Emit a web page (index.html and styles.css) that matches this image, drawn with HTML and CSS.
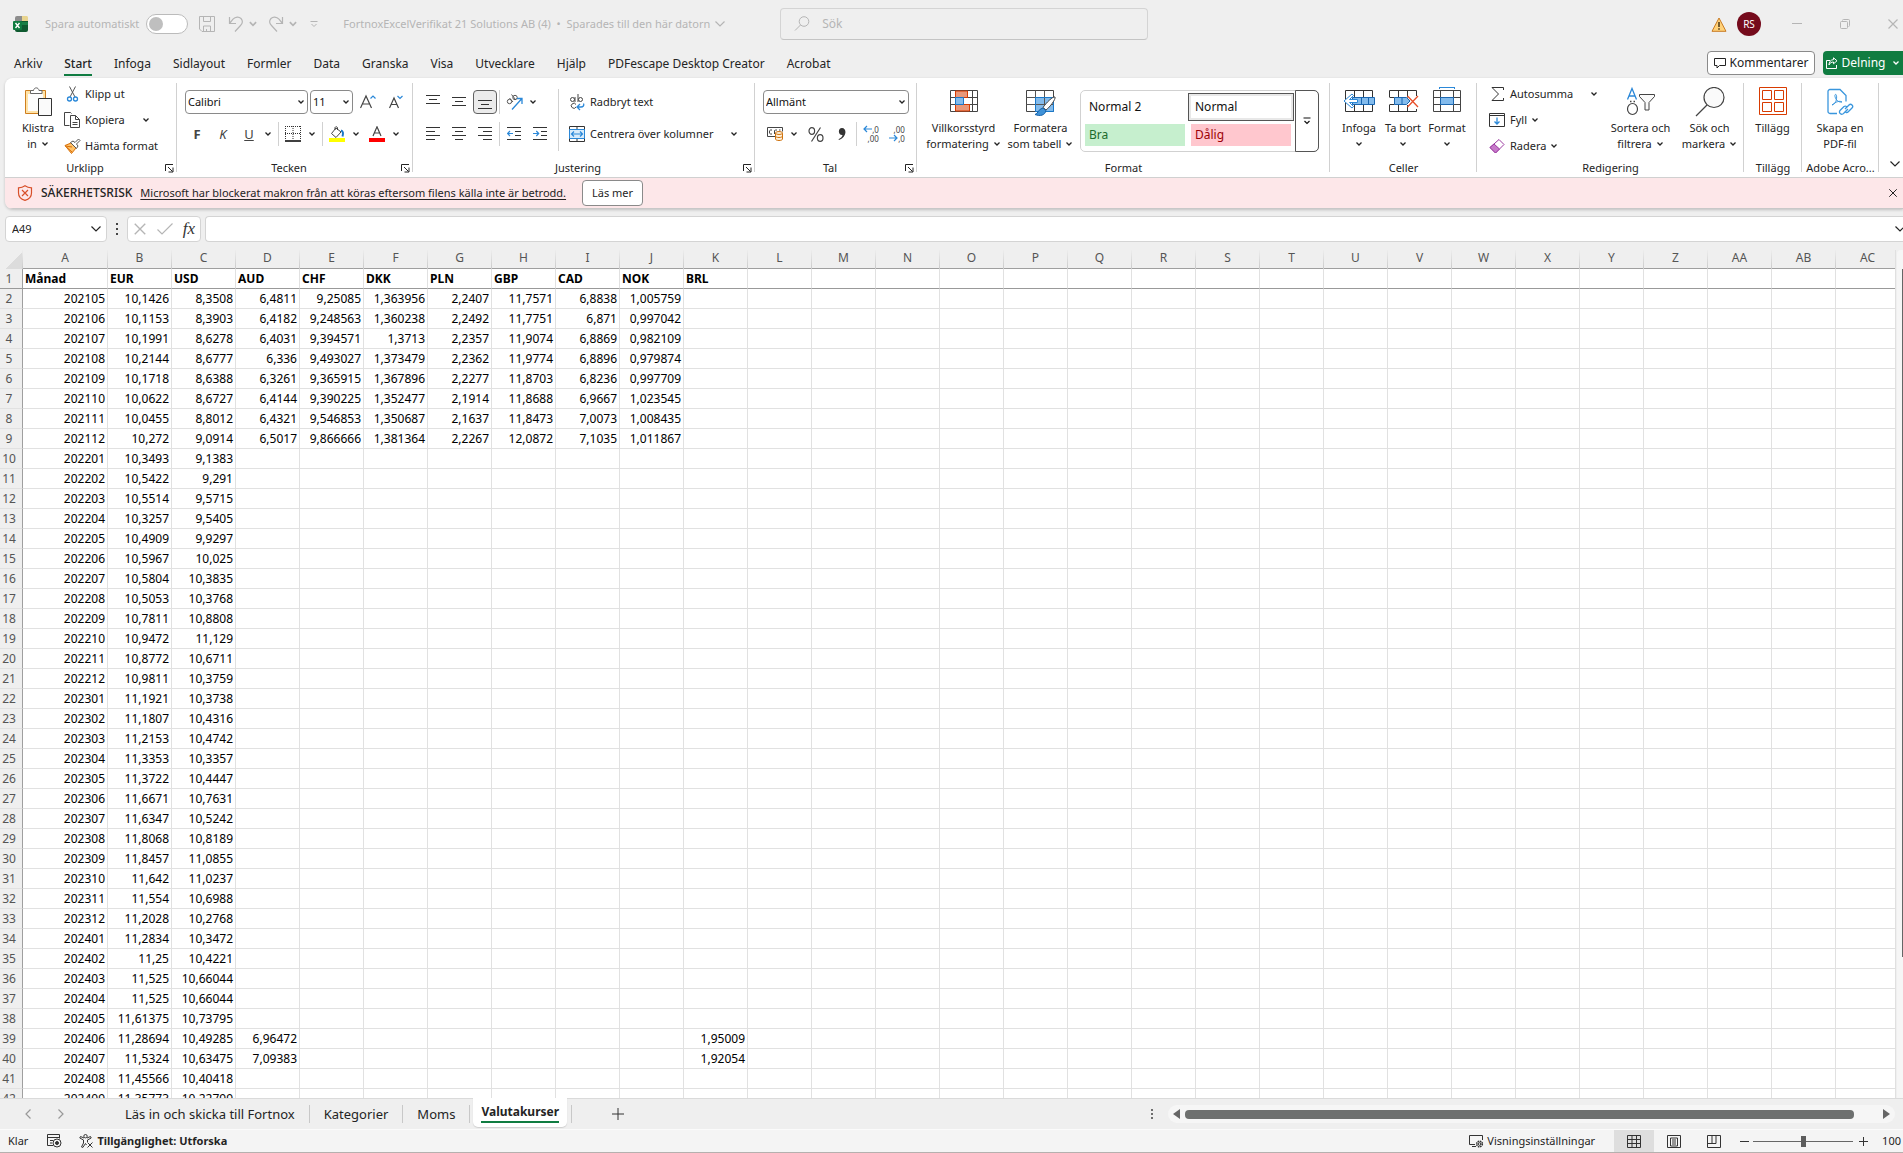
FILE: index.html
```html
<!DOCTYPE html>
<html lang="sv">
<head>
<meta charset="utf-8">
<title>FortnoxExcelVerifikat 21 Solutions AB (4)</title>
<link rel="stylesheet" href="styles.css">
</head>
<body>
<svg class="defs" aria-hidden="true">
  <symbol id="chev" viewBox="0 0 8 8"><path d="M1.5 2.5 4 5 6.5 2.5" fill="none" stroke="currentColor" stroke-width="1.3"/></symbol>
  <symbol id="chev-lg" viewBox="0 0 12 8"><path d="M1.5 1.5 6 6 10.5 1.5" fill="none" stroke="currentColor" stroke-width="1.2"/></symbol>
  <symbol id="close" viewBox="0 0 12 12"><path d="M1.5 1.5 10.500 10.500M10.500 1.500 1.500 10.500" fill="none" stroke="currentColor" stroke-width="1.2"/></symbol>
  <symbol id="launch" viewBox="0 0 9 9"><path d="M.5 7V.5H8M3 3l4.500 4.500M8 3.500V8H3.500" fill="none" stroke="currentColor"/></symbol>
</svg>

<header class="titlebar">
  <div class="title-left">
    <svg class="logo" width="16" height="16" viewBox="0 0 16 16"><path d="M4 0h5v6H2V2a2 2 0 0 1 2-2z" fill="#8d8d8d"/><path d="M9 0h5a2 2 0 0 1 1 2v4H9z" fill="#e8d48f"/><path d="M2 5h13v9a2 2 0 0 1-2 2H4a2 2 0 0 1-2-2z" fill="#0f5a30"/><path d="M9 6h6v3H9z" fill="#1a7f45"/><rect y="5" width="9" height="9" rx="1" fill="#107c41"/><path d="M2.500 7l4 5M6.500 7l-4 5" stroke="#fff" stroke-width="1.400"/></svg>
    <label class="autosave"><span>Spara automatiskt</span><input type="checkbox" class="toggle"></label>
    <button class="qa save" aria-label="Spara"><svg width="16" height="16" viewBox="0 0 16 16" fill="none" stroke="currentColor"><path d="M.5.5h15v15H3L.5 13zM4.500.5v5h7v-5M4.500 15.500V10h7v5.500M7.500 13v2"/></svg></button>
    <button class="qa undo" aria-label="Ångra"><svg width="16" height="16" viewBox="0 0 16 16" fill="none" stroke="currentColor" stroke-width="1.200"><path d="M1.500 1v6.500H8M1.500 7.500 5 3.200C7.500.500 11 .500 13 2.500c2 2.200 1.800 5-.500 7L7 15.500"/></svg><svg width="10" height="10"><use href="#chev"/></svg></button>
    <button class="qa redo" aria-label="Gör om"><svg width="16" height="16" viewBox="0 0 16 16" fill="none" stroke="currentColor" stroke-width="1.200"><path d="M14.500 1v6.500H8M14.500 7.500 11 3.200C8.500.500 5 .500 3 2.500c-2 2.200-1.800 5 .500 7L9 15.500"/></svg><svg width="10" height="10"><use href="#chev"/></svg></button>
    <button class="qa more" aria-label="Anpassa"><svg width="8" height="8" viewBox="0 0 8 8" fill="none" stroke="currentColor"><path d="M.5 1.500h7M1.500 4 4 6.500 6.500 4"/></svg></button>
    <button class="doc">FortnoxExcelVerifikat 21 Solutions AB (4) &nbsp;•&nbsp; Sparades till den här datorn <svg width="12" height="8"><use href="#chev-lg"/></svg></button>
  </div>
  <label class="search"><svg width="16" height="16" viewBox="0 0 16 16" fill="none" stroke="currentColor"><circle cx="10" cy="5.500" r="4.800"/><path d="M6.500 9 1 14.500"/></svg><input type="text" placeholder="Sök" aria-label="Sök"></label>
  <div class="title-right">
    <svg width="16" height="15" viewBox="0 0 16 15"><path d="M8 1 15 14.300H1z" fill="#ffd27a" stroke="#c87a22"/><path d="M8 5v5M8 11.300v1.500" stroke="#3a2a10" stroke-width="1.400"/></svg>
    <span class="avatar">RS</span>
    <button class="win" aria-label="Minimera"><svg width="10" height="10"><path d="M0 4.500h10" stroke="currentColor"/></svg></button>
    <button class="win" aria-label="Återställ"><svg width="10" height="10" fill="none" stroke="currentColor"><rect x=".5" y="2.500" width="7" height="7" rx="1"/><path d="M2.500 1.500a1 1 0 0 1 1-1h5a1 1 0 0 1 1 1v5a1 1 0 0 1-1 1"/></svg></button>
    <button class="win" aria-label="Stäng"><svg width="12" height="12"><use href="#close"/></svg></button>
  </div>
</header>

<nav class="tabs">
  <a href="#">Arkiv</a><a href="#" class="on">Start</a><a href="#">Infoga</a><a href="#">Sidlayout</a><a href="#">Formler</a><a href="#">Data</a><a href="#">Granska</a><a href="#">Visa</a><a href="#">Utvecklare</a><a href="#">Hjälp</a><a href="#">PDFescape Desktop Creator</a><a href="#">Acrobat</a>
  <button class="comments"><svg width="12" height="11" viewBox="0 0 12 11" fill="none" stroke="currentColor"><path d="M.5.5h11v7H5.500l-2.500 2.500V7.500H.5z"/></svg>Kommentarer</button>
  <button class="share"><svg width="12" height="12" viewBox="0 0 12 12" fill="none" stroke="currentColor"><path d="M4 3.500H.5v8h10V8M7.500.8l3.500 3-3.500 3V5C5.500 5 4 5.800 3 8c0-3 1.500-5.200 4.500-5.400z"/></svg>Delning<svg class="chev" width="8" height="8"><use href="#chev"/></svg></button>
</nav>

<main class="ribbon-wrap">
<div class="ribbon">
  <section class="group g-clip">
    <div class="body">
      <button class="big w52"><svg width="32" height="30" viewBox="0 0 32 30" fill="none"><path d="M3.500 3.500h20v23h-20z" fill="#ffe3a8" stroke="#cf7f1e"/><path d="M6 7h15v17H6z" fill="#fdfdfd"/><path d="M8.500 6.500v-3h3c.500-3.500 5-3.500 5.500 0h3v3z" fill="#fff" stroke="#666"/><path d="M16.500 11.500h13v17h-13z" fill="#fafafa" stroke="#333"/></svg><span>Klistra</span><span>in <svg width="8" height="8"><use href="#chev"/></svg></span></button>
      <div class="stack">
        <button class="small"><svg width="17" height="16" viewBox="0 0 17 16" fill="none"><path d="M5.500.5 11 11M11.500.5 6 11" stroke="#555"/><circle cx="5.500" cy="13" r="2" stroke="#2b88d8" stroke-width="1.300"/><circle cx="11.500" cy="13" r="2" stroke="#2b88d8" stroke-width="1.300"/></svg>Klipp ut</button>
        <button class="small"><svg width="17" height="16" viewBox="0 0 17 16" fill="none" stroke="#444"><path d="M5.500 13.500h-5V.5h6l1 1M6.500 3.500h5l4 4v8h-9zM11.500 3.500v4h4M8.500 10.500h5M8.500 12.500h5"/></svg>Kopiera<svg class="far" width="8" height="8"><use href="#chev"/></svg></button>
        <button class="small"><svg width="17" height="16" viewBox="0 0 17 16" fill="none"><path d="M1 7.500l6-2.500 5 5-4.500 5.500z" fill="#ffc269" stroke="#d8700a"/><path d="M3 9.500l5 4.500M1 8l7 1" stroke="#d8700a"/><path d="M6.500 4.500 9 3l2 1.500L14.500 1 16 2.500 12.500 6 14 8l-1.500 2.500z" fill="#fff" stroke="#555"/></svg>Hämta format</button>
      </div>
    </div>
    <footer><span>Urklipp</span><button class="launch" aria-label="Urklipp"><svg width="9" height="9"><use href="#launch"/></svg></button></footer>
  </section>

  <section class="group g-font">
    <div class="body rows">
      <div class="row">
        <span class="combo w122"><select aria-label="Teckensnitt"><option>Calibri</option></select><svg width="8" height="8"><use href="#chev"/></svg></span>
        <span class="combo w43"><select aria-label="Storlek"><option>11</option></select><svg width="8" height="8"><use href="#chev"/></svg></span>
        <button class="tb" aria-label="Öka"><svg width="16" height="16" viewBox="0 0 16 16" fill="none" stroke="#444" stroke-width="1.200"><path d="M.5 14 6 2l5.500 12M2.500 10h7"/><path d="M10.500 4.500 13 2l2.500 2.500" stroke="#2b88d8"/></svg></button>
        <button class="tb" aria-label="Minska"><svg width="14" height="16" viewBox="0 0 14 16" fill="none" stroke="#444" stroke-width="1.200"><path d="M.5 14 5 4l4.500 10M2 10.500h6"/><path d="M8.500 2 11 4.500 13.500 2" stroke="#2b88d8"/></svg></button>
      </div>
      <div class="row low">
        <button class="tb"><b>F</b></button><button class="tb"><i>K</i></button><button class="tb"><u>U</u></button><button class="cv"><svg width="8" height="8"><use href="#chev"/></svg></button>
        <span class="sep"></span>
        <button class="tb" aria-label="Kantlinjer"><svg width="16" height="16" viewBox="0 0 16 16" fill="none" stroke="#333"><path d="M.5 0v14M15.500 0v14M0 .5h16M8 0v14M0 7.500h16" stroke-dasharray="1 1"/><path d="M0 15h16" stroke="#000" stroke-width="1.500"/></svg></button><button class="cv"><svg width="8" height="8"><use href="#chev"/></svg></button>
        <span class="sep"></span>
        <button class="tb" aria-label="Fyllning"><svg width="16" height="16" viewBox="0 0 16 16" fill="none"><path d="M7 2 2.500 7.500l4.500 4 5-5.500zM6 4V1.500C6.500.500 8 .500 8.500 1.500V4" stroke="#444"/><path d="M12 4.500c2 .500 2.500 2.500 1.500 6" stroke="#1a78c8" stroke-width="2"/><path d="M0 12h16v4H0z" fill="#ff0"/></svg></button><button class="cv"><svg width="8" height="8"><use href="#chev"/></svg></button>
        <button class="tb fc" aria-label="Teckenfärg"><svg width="16" height="16" viewBox="0 0 16 16" fill="none"><path d="M4 10 8 .8 12 10M5.500 7h5" stroke="#444" stroke-width="1.200"/><path d="M0 12h16v4H0z" fill="red"/></svg></button><button class="cv"><svg width="8" height="8"><use href="#chev"/></svg></button>
      </div>
    </div>
    <footer><span>Tecken</span><button class="launch" aria-label="Tecken"><svg width="9" height="9"><use href="#launch"/></svg></button></footer>
  </section>

  <section class="group g-align">
    <div class="body">
      <div class="rows">
        <div class="row tight">
          <button class="tb" aria-label="Överst"><svg width="14" height="14"><path d="M0 .5h14M3 4.500h8M0 8.500h14" stroke="#333"/></svg></button>
          <button class="tb" aria-label="Mitten"><svg width="14" height="14"><path d="M0 2.500h14M3 6.500h8M0 10.500h14" stroke="#333"/></svg></button>
          <button class="tb sel" aria-label="Nederst"><svg width="14" height="14"><path d="M0 5.500h14M3 9.500h8M0 13.500h14" stroke="#333"/></svg></button>
          <span class="sep"></span>
          <button class="tb" aria-label="Orientering"><svg width="17" height="16" viewBox="0 0 17 16" fill="none" stroke="#555"><circle cx="3.500" cy="7.500" r="2.200"/><path d="M3.500 4l3.500 4M5.500.5l4 5"/><circle cx="9" cy="3.500" r="2.200"/><path d="M6 15.500 15.500 5M11 4.500h5V10" stroke="#2b88d8" stroke-width="1.300"/></svg></button><button class="cv"><svg width="8" height="8"><use href="#chev"/></svg></button>
        </div>
        <div class="row low tight">
          <button class="tb" aria-label="Vänster"><svg width="14" height="14"><path d="M0 .5h14M0 4.500h9M0 8.500h14M0 12.500h9" stroke="#333"/></svg></button>
          <button class="tb" aria-label="Centrera"><svg width="14" height="14"><path d="M0 .5h14M3 4.500h8M0 8.500h14M3 12.500h8" stroke="#333"/></svg></button>
          <button class="tb" aria-label="Höger"><svg width="14" height="14"><path d="M0 .5h14M5 4.500h9M0 8.500h14M5 12.500h9" stroke="#333"/></svg></button>
          <span class="sep"></span>
          <button class="tb" aria-label="Minska indrag"><svg width="14" height="14" fill="none"><path d="M0 .5h14M8 4.500h6M8 8.500h6M0 12.500h14" stroke="#333"/><path d="M6 6.500H.8M3 4 .6 6.500 3 9" stroke="#2b88d8" stroke-width="1.200"/></svg></button>
          <button class="tb" aria-label="Öka indrag"><svg width="14" height="14" fill="none"><path d="M0 .5h14M8 4.500h6M8 8.500h6M0 12.500h14" stroke="#333"/><path d="M0 6.500h5.500M3.300 4l2.400 2.500L3.300 9" stroke="#2b88d8" stroke-width="1.200"/></svg></button>
        </div>
      </div>
      <span class="tallsep"></span>
      <div class="rows wrapcol">
        <button class="small r24"><svg width="18" height="17" viewBox="0 0 18 17" fill="none" stroke="#444"><circle cx="4.500" cy="5.500" r="2"/><path d="M7 3v5M10 0v8M8 13a2.500 2.500 0 1 1 0-2.500"/><circle cx="12.500" cy="5.500" r="2"/><path d="M15.500 9.500c1 2-.500 3.500-2.500 3.500H9.500M12 10l-3 3 3 3" stroke="#2b88d8" stroke-width="1.300"/></svg>Radbryt text</button>
        <button class="small r32"><svg width="18" height="16" viewBox="0 0 18 16" fill="none" stroke="#333"><path d="M1.500.5h15v15h-15zM9 .5v3M9 12.500v3"/><path d="M1.500 3.500h15v9h-15z" fill="#d9ecfb" stroke="#2b88d8"/><path d="M4 8h10M6 5.500 3.500 8 6 10.500M12 5.500 14.500 8 12 10.500" stroke="#2b88d8" stroke-width="1.200"/></svg>Centrera över kolumner<svg class="far" width="8" height="8"><use href="#chev"/></svg></button>
      </div>
    </div>
    <footer><span>Justering</span><button class="launch" aria-label="Justering"><svg width="9" height="9"><use href="#launch"/></svg></button></footer>
  </section>

  <section class="group g-num">
    <div class="body rows">
      <div class="row">
        <span class="combo w146"><select aria-label="Talformat"><option>Allmänt</option></select><svg width="8" height="8"><use href="#chev"/></svg></span>
      </div>
      <div class="row low tight">
        <button class="tb" aria-label="Valuta"><svg width="17" height="14" viewBox="0 0 17 14" fill="none" stroke="#444"><path d="M8 9.500H.5v-9h15v4M5 3H3.500C2 3 2 7 3.500 7H5M7.500 7V3.500C8 3 9 3 10 3M12 3h1.500"/><path d="M8.500 6v6c0 2 7 2 7 0V6" fill="#fff0d8" stroke="#cf7310"/><ellipse cx="12" cy="6" rx="3.500" ry="1.500" fill="#fff0d8" stroke="#cf7310"/><path d="M8.500 9c0 2 7 2 7 0" stroke="#cf7310"/></svg></button><button class="cv"><svg width="8" height="8"><use href="#chev"/></svg></button>
        <button class="tb pct" aria-label="Procent"><svg width="16" height="15" viewBox="0 0 16 15" fill="none" stroke="#444" stroke-width="1.200"><ellipse cx="3.800" cy="4" rx="2.800" ry="3.300"/><ellipse cx="12.200" cy="11" rx="2.800" ry="3.300"/><path d="M12.500.5l-9 14"/></svg></button>
        <button class="tb" aria-label="Tusental"><svg width="8" height="12" viewBox="0 0 8 12"><path d="M4 0c5 0 5 9-3 12l-.500-.800C3 10 4.500 8.500 4.500 7 0 7.500-.500 0 4 0z" fill="#333"/></svg></button>
        <span class="sep"></span>
        <button class="tb" aria-label="Öka decimal"><span class="dec"><span><svg width="9" height="8" fill="none" stroke="#2b88d8" stroke-width="1.200"><path d="M9 4H1M4 1 1 4l3 3"/></svg>,0</span><span>,00</span></span></button>
        <button class="tb" aria-label="Minska decimal"><span class="dec"><span>,00</span><span><svg width="9" height="8" fill="none" stroke="#2b88d8" stroke-width="1.200"><path d="M0 4h8M5 1l3 3-3 3"/></svg>,0</span></span></button>
      </div>
    </div>
    <footer><span>Tal</span><button class="launch" aria-label="Tal"><svg width="9" height="9"><use href="#launch"/></svg></button></footer>
  </section>

  <section class="group g-style">
    <div class="body">
      <button class="big w77"><svg width="28" height="30" viewBox="0 0 28 30" fill="none"><path d="M.5 3.500h27v21H.5zM.5 10.500h27M.5 17.500h27M22.500 3.500v21" fill="#fff" stroke="#444"/><path d="M5.500 4h12v6.500h-12zM5.500 17.500h14v6.500h-14z" fill="#e8987a" stroke="#d83b01"/><path d="M5.500 10.500h8v7h-8z" fill="#83bbec" stroke="#1a78c8"/></svg><span>Villkorsstyrd</span><span>formatering <svg width="8" height="8"><use href="#chev"/></svg></span></button>
      <button class="big w77"><svg width="30" height="30" viewBox="0 0 30 30" fill="none"><path d="M.5 3.500h27v21H.5z" fill="#fff" stroke="#444"/><path d="M9.500 10.500h18v14h-18z" fill="#83bbec"/><path d="M.5 10.500h27M.5 17.500h27M9.500 3.500v21M18.500 3.500v21" stroke="#555"/><path d="M9.500 10.500h18v14h-18z" stroke="#1a78c8"/><path d="M29 10c1 2-5 10-9 13l-3-2.500C20 16 27 9 29 10z" fill="#fff" stroke="#444"/><path d="M17 21l3 2.500c-1 5-6 6-11 4 3-.500 3.500-6 8-6.500z" fill="#3f92d8" stroke="#1460a8"/></svg><span>Formatera</span><span>som tabell <svg width="8" height="8"><use href="#chev"/></svg></span></button>
      <div class="gallery">
        <div class="styles">
          <button class="st">Normal 2</button><button class="st current">Normal</button>
          <button class="st good">Bra</button><button class="st bad">Dålig</button>
        </div>
        <button class="gmore" aria-label="Fler format"><svg width="8" height="8" viewBox="0 0 8 8" fill="none" stroke="currentColor" stroke-width="1.200"><path d="M.5 1h7M1.500 4 4 6.500 6.500 4"/></svg></button>
      </div>
    </div>
    <footer><span>Format</span></footer>
  </section>

  <section class="group g-cells">
    <div class="body">
      <button class="big w44"><svg width="32" height="30" viewBox="0 0 32 30" fill="none"><path d="M2.500 3.500h27v21h-27zM11.500 3.500v21M20.500 3.500v21" fill="#fff" stroke="#333"/><path d="M9.500 10.500h22v7h-22z" fill="#83bbec" stroke="#1a66b0"/><path d="M18.500 10.500v7M25.500 10.500v7" stroke="#1a66b0"/><path d="M14.500 12.500H6.500l4-4-1.500-1.500L1 14l8 7 1.500-1.500-4-4h8z" fill="#fff" stroke="#2b88d8"/></svg><span>Infoga</span><span><svg width="8" height="8"><use href="#chev"/></svg></span></button>
      <button class="big w44"><svg width="32" height="30" viewBox="0 0 32 30" fill="none"><path d="M2.500 10V3.500h27V9M2.500 18v6.500h27V22M11.500 3.500v7M20.500 3.500v7M11.500 18v6.500M20.500 18v6.500M2.500 10.500h5M2.500 17.500h5" stroke="#333"/><path d="M7.500 10.500h12l3.500 3.500-3.500 3.500h-12z" fill="#83bbec" stroke="#1a66b0"/><path d="M15 10.500v7" stroke="#1a66b0"/><path d="M20.500 9 31 20M31 9 20.500 20" stroke="#e8502a" stroke-width="1.300"/></svg><span>Ta bort</span><span><svg width="8" height="8"><use href="#chev"/></svg></span></button>
      <button class="big w44"><svg width="30" height="30" viewBox="0 0 30 30" fill="none"><path d="M1.500 3.500h27v21h-27zM1.500 10.500h27M1.500 17.500h27M8.500 3.500v21M21.500 3.500v21" fill="#fff" stroke="#444"/><path d="M8.500 10.500h13v7h-13z" fill="#83bbec" stroke="#1a66b0"/><path d="M7.500.5h15M7.500 0v2M22.500 0v2" stroke="#2b88d8"/></svg><span>Format</span><span><svg width="8" height="8"><use href="#chev"/></svg></span></button>
    </div>
    <footer><span>Celler</span></footer>
  </section>

  <section class="group g-edit">
    <div class="body">
      <div class="stack">
        <button class="small"><svg width="17" height="16" viewBox="0 0 17 16" fill="none" stroke="#333"><path d="M14.500 4V1.500H3L9.500 8 3 14.500h11.500V12"/></svg>Autosumma<svg class="far" width="8" height="8"><use href="#chev"/></svg></button>
        <button class="small"><svg width="17" height="16" viewBox="0 0 17 16" fill="none" stroke="#333"><path d="M.5 1.500h15v13H.5zM.5 3.500h15"/><path d="M8 5.500v6.500M5.500 9.500 8 12l2.500-2.500" stroke="#2b88d8" stroke-width="1.300"/></svg>Fyll<svg width="8" height="8"><use href="#chev"/></svg></button>
        <button class="small"><svg width="17" height="16" viewBox="0 0 17 16" fill="none" stroke="#9b3aa0"><path d="M10 1.500 15 6.500 6.500 15 1 9.500z" fill="#fff"/><path d="M5 6 10.500 11 6.500 15 1 9.500z" fill="#c678c9"/></svg>Radera<svg width="8" height="8"><use href="#chev"/></svg></button>
      </div>
      <button class="big w70"><svg width="30" height="30" viewBox="0 0 30 30" fill="none"><path d="M1.500 12.500 6 1.500l4.500 11M3 9h6" stroke="#2b88d8" stroke-width="1.300"/><ellipse cx="6.500" cy="22" rx="5" ry="5.500" stroke="#444" stroke-width="1.200"/><path d="M4 14.500h1.500M7.500 14.500H9" stroke="#444" stroke-width="1.300"/><path d="M13.500 7.500h15v2l-5.500 6v7.500h-4v-7.500l-5.500-6z" fill="#fafafa" stroke="#444"/></svg><span>Sortera och</span><span>filtrera <svg width="8" height="8"><use href="#chev"/></svg></span></button>
      <button class="big w70"><svg width="30" height="30" viewBox="0 0 30 30" fill="none" stroke="#444" stroke-width="1.200"><circle cx="19" cy="10.500" r="10" fill="#fafafa"/><path d="M12 18 1 29"/></svg><span>Sök och</span><span>markera <svg width="8" height="8"><use href="#chev"/></svg></span></button>
    </div>
    <footer><span>Redigering</span></footer>
  </section>

  <section class="group g-add">
    <div class="body">
      <button class="big w57"><svg width="28" height="30" viewBox="0 0 28 30" fill="none" stroke="#d83b01"><path d="M.5.5h27v27H.5zM3.500 3.500h9v9h-9zM15.500 3.500h9v9h-9zM3.500 15.500h9v9h-9zM15.500 15.500h9v9h-9z"/></svg><span>Tillägg</span></button>
    </div>
    <footer><span>Tillägg</span></footer>
  </section>

  <section class="group g-adobe">
    <div class="body">
      <button class="big w76"><svg width="28" height="30" viewBox="0 0 28 30" fill="none" stroke="#3a96dd" stroke-width="1.300"><path d="M11 26.500H4a2 2 0 0 1-2-2v-20a2 2 0 0 1 2-2h10l6 6v6"/><path d="M6 18c4-1 5-6 4.500-9.500-.500-2-2-1-1.500 1 .800 3.500 3.500 6 7 5.500-2-1.500-6-.500-10 3z" stroke-width="1"/><path d="M19 22l4-4c2-2 5 1 3 3l-4 4c-1 1-2.500.500-3-.500M22 22l-4 4c-2 3-6 0-4-2.500l4-4c1.500-1 3 0 3 1"/></svg><span>Skapa en</span><span>PDF-fil</span></button>
    </div>
    <footer><span>Adobe Acro...</span></footer>
  </section>
  <button class="collapse" aria-label="Dölj menyfliksområdet"><svg width="12" height="8"><use href="#chev-lg"/></svg></button>
</div>

<div class="risk">
  <svg width="16" height="16" viewBox="0 0 16 16" fill="none" stroke="#d8502a" stroke-width="1.200"><path d="M8 .8c2 1.500 4 2 6.500 2V8c0 4-3 6.300-6.500 7.300C4.500 14.300 1.500 12 1.500 8V2.800c2.500 0 4.500-.500 6.500-2zM5 5l6 6M11 5l-6 6"/></svg>
  <span class="risk-h">SÄKERHETSRISK</span>
  <a href="#">Microsoft har blockerat makron från att köras eftersom filens källa inte är betrodd.</a>
  <button class="readmore">Läs mer</button>
  <button class="risk-x" aria-label="Stäng"><svg width="10" height="10" viewBox="0 0 12 12"><use href="#close"/></svg></button>
</div>
</main>

<div class="fbar">
  <div class="namebox"><input type="text" value="A49" aria-label="Namnruta"><svg width="12" height="8"><use href="#chev-lg"/></svg></div>
  <svg class="dots" width="2" height="12"><path d="M0 1h2M0 6h2M0 11h2" stroke="#444" stroke-width="2"/></svg>
  <div class="fbtns">
    <button aria-label="Avbryt"><svg width="14" height="14" viewBox="0 0 12 12"><use href="#close"/></svg></button>
    <button aria-label="Ange"><svg width="16" height="12" fill="none" stroke="currentColor" stroke-width="1.200"><path d="M.5 6.500 5 11 15.500.5"/></svg></button>
    <button class="fx">fx</button>
  </div>
  <div class="finput"><input type="text" aria-label="Formelfält"><svg width="12" height="8"><use href="#chev-lg"/></svg></div>
</div>

<div class="sheet">
  <div class="grid"><table id="grid"><thead></thead><tbody></tbody></table></div>
  <div class="vscroll"><span></span></div>
</div>

<div class="sheetbar">
  <button class="nav" aria-label="Föregående"><svg width="6" height="10" fill="none" stroke="currentColor" stroke-width="1.200"><path d="M5.500.5 1 5l4.500 4.500"/></svg></button>
  <button class="nav" aria-label="Nästa"><svg width="6" height="10" fill="none" stroke="currentColor" stroke-width="1.200"><path d="M.5.5 5 5 .5 9.500"/></svg></button>
  <div class="sheets">
    <button>Läs in och skicka till Fortnox</button><button>Kategorier</button><button>Moms</button><button class="active"><span>Valutakurser</span></button>
  </div>
  <button class="plus" aria-label="Nytt blad"><svg width="12" height="12"><path d="M6 0v12M0 6h12" stroke="#333"/></svg></button>
  <svg class="grip" width="2" height="10"><path d="M0 1h2M0 5h2M0 9h2" stroke="#444" stroke-width="1.500"/></svg>
  <div class="hscroll"><svg width="7" height="10"><path d="M7 0v10L0 5z" fill="#666"/></svg><span></span><svg width="7" height="10"><path d="M0 0v10L7 5z" fill="#666"/></svg></div>
</div>

<footer class="status">
  <span>Klar</span>
  <svg class="mac" width="15" height="14" viewBox="0 0 15 14" fill="none" stroke="#333"><path d="M6 11.500H.5V.5h12v4M.5 3.500h12M3 6.500h3M3 9h2"/><circle cx="10" cy="9" r="4"/><circle cx="10" cy="9" r="1.500" fill="#333"/></svg>
  <button class="acc"><svg width="15" height="14" viewBox="0 0 15 14" fill="none" stroke="#333"><circle cx="6.500" cy="2.200" r="1.700"/><path d="M5 4 1.500 2.500.800 4 4.500 6v3L2.500 13l1.300.5L6.500 9.500l1 1.500M8 4l3.500-1.500.7 1.500L8.500 6v2M8.500 8.500l5 5M13.500 8.500l-5 5"/></svg><b>Tillgänglighet: Utforska</b></button>
  <button class="disp"><svg width="15" height="13" viewBox="0 0 15 13" fill="none" stroke="#333"><path d="M6 9.500H.5v-9h13V5M3 11.500h4"/><circle cx="10.500" cy="9" r="2.800" stroke-width="1.600" stroke-dasharray="1.500 .7"/><circle cx="10.500" cy="9" r="1.300"/></svg>Visningsinställningar</button>
  <button class="view on" aria-label="Normal"><svg width="14" height="13" fill="none" stroke="#333"><path d="M.5.5h13v12H.5zM.5 4.500h13M.5 8.500h13M5 .5v12M9.500.5v12"/></svg></button>
  <button class="view" aria-label="Sidlayout"><svg width="14" height="13" fill="none" stroke="#333"><path d="M.5.5h13v12H.5zM3.500 3h7v8h-7zM5 5h4M5 7h4M5 9h4"/></svg></button>
  <button class="view" aria-label="Sidbrytning"><svg width="14" height="13" fill="none" stroke="#333"><path d="M.5.5h13v12H.5zM.5 8.500h8.500v-8M5 .5v8"/></svg></button>
  <button class="zm" aria-label="Zooma ut"><svg width="9" height="9"><path d="M0 4.500h9" stroke="#333"/></svg></button>
  <input type="range" class="zoom" min="10" max="190" value="100" aria-label="Zoom">
  <button class="zm" aria-label="Zooma in"><svg width="9" height="9"><path d="M4.500 0v9M0 4.500h9" stroke="#333"/></svg></button>
  <span class="pc">100 %</span>
</footer>
<script src="grid.js"></script>
</body>
</html>
```
FILE: styles.css
```css
* { box-sizing: border-box; }
body {
  margin: 0; height: 100vh; overflow: hidden;
  display: flex; flex-direction: column;
  background: #efefef; color: #242424;
  font: 12px/16px "Noto Sans", "Open Sans", sans-serif;
}
button, input, select { font: inherit; color: inherit; margin: 0; padding: 0; border: 0; background: none; }
button { display: flex; align-items: center; justify-content: center; white-space: nowrap; flex: none; }
a { color: inherit; text-decoration: none; }
svg { flex: none; display: block; }
.defs { position: absolute; width: 0; height: 0; }

/* title bar */
.titlebar { display: grid; grid-template-columns: 41% 368px 1fr; height: 48px; align-items: center; color: #b5b5b5; font-size: 11px; flex: none; }
.title-left { display: flex; align-items: center; padding-left: 13px; }
.autosave { display: flex; align-items: center; gap: 7px; margin-left: 16px; }
.toggle { appearance: none; width: 42px; height: 20px; border: 1px solid #bbb; border-radius: 10px; background: #fff; display: flex; align-items: center; padding-left: 2px; }
.toggle::before { content: ""; width: 14px; height: 14px; border-radius: 7px; background: #bfbfbf; }
.qa { gap: 4px; }
.save { margin-left: 11px; }
.undo { margin-left: 13px; }
.redo { margin-left: 10px; }
.more { margin-left: 12px; }
.doc { margin-left: 25px; gap: 4px; }
.search { display: flex; align-items: center; gap: 12px; height: 32px; border: 1px solid #d4d4d4; border-bottom-color: #c4c4c4; border-radius: 4px; padding-left: 13px; }
.search input { flex: 1; font-size: 12px; }
.search input::placeholder { color: #b5b5b5; opacity: 1; }
.title-right { display: flex; align-items: center; justify-content: flex-end; padding-right: 4px; }
.avatar { width: 24px; height: 24px; border-radius: 12px; background: #750b1c; color: #fff; font-size: 10px; line-height: 24px; text-align: center; margin: 0 26px 0 10px; }
.win { width: 12px; margin-left: 36px; }
.avatar + .win { margin-left: 4px; }

/* ribbon tabs */
.tabs { display: flex; align-items: center; height: 30px; padding-left: 14px; gap: 22px; flex: none; }
.tabs a { line-height: 20px; padding-top: 4px; border-bottom: 2px solid transparent; }
.tabs a.on { border-color: #107c41; font-weight: 500; }
.comments { margin-left: auto; margin-right: -14px; width: 108px; height: 24px; gap: 4px; border: 1px solid #8a8a8a; border-radius: 4px; background: #fff; }
.share { width: 80px; height: 24px; gap: 4px; background: #107c41; color: #fff; border-radius: 4px 0 0 4px; }
.share .chev { margin-left: 3px; }

/* ribbon */
.ribbon-wrap { margin-left: 5px; border-radius: 8px 0 0 8px; overflow: hidden; flex: none; box-shadow: 0 1px 3px #0003; }
.ribbon { display: flex; height: 100px; background: #fff; border-bottom: 1px solid #d0d0d0; font-size: 11px; }
.group { display: flex; flex-direction: column; flex: none; position: relative; }
.group::after { content: ""; position: absolute; right: 0; top: 5px; bottom: 5px; width: 1px; background: #d1d1d1; }
.group footer { display: flex; height: 18px; align-items: center; }
.group footer span { flex: 1; text-align: center; }
.launch { width: 12px; justify-content: flex-start; }
.body { display: flex; height: 81px; padding-top: 9px; }
.g-clip { width: 172px; }
.g-font { width: 236px; }
.g-align { width: 342px; }
.g-num { width: 162px; }
.g-style { width: 413px; }
.g-cells { width: 147px; }
.g-edit { width: 267px; }
.g-add { width: 58px; }
.g-adobe { width: 77px; }
.g-clip .body, .g-font .body, .g-align .body, .g-num .body, .g-style .body { padding-left: 8px; }
.g-cells .body { padding-left: 7px; }
.g-edit .body { padding-left: 12px; }
.big { flex-direction: column; justify-content: flex-start; align-self: flex-start; }
.big > svg { height: 30px; margin-bottom: 3px; }
.big span { display: flex; align-items: center; gap: 4px; min-height: 16px; }
.w44 { width: 44px; } .w52 { width: 50px; } .w57 { width: 57px; } .w70 { width: 69px; } .w76 { width: 76px; } .w77 { width: 77px; }
.stack { display: flex; flex-direction: column; margin-top: -6px; }
.small { height: 26px; gap: 4px; justify-content: flex-start; }
.g-clip .stack { margin-left: 1px; }
.far { margin-left: 13px; }
.g-edit .stack { width: 119px; }
.rows { display: flex; flex-direction: column; }
.body.rows, .g-align .rows { padding-top: 3px; }
.body.rows { padding-top: 12px; }
.row { display: flex; align-items: center; height: 24px; gap: 2px; }
.row.low { height: 32px; gap: 0; margin: 4px 0 0 -1px; font-size: 13px; }
.row.tight { gap: 0; margin-left: -1px; }
.combo { display: grid; height: 24px; align-items: center; flex: none; }
.combo > * { grid-area: 1 / 1; }
.combo select { appearance: none; width: 100%; height: 24px; border: 1px solid #8a8a8a; border-radius: 4px; background: #fff; padding: 0 2px; color: #111; }
.combo svg { justify-self: end; margin-right: 3px; pointer-events: none; }
.w122 { width: 123px; } .w43 { width: 43px; } .w146 { width: 146px; }
.tb { width: 26px; height: 24px; }
.row > .tb { color: #444; }
.cv { width: 12px; height: 24px; }
.fc { margin-left: 2px; }
.sep { width: 1px; height: 24px; background: #d1d1d1; margin: 0 1px 0 4px; }
.tight .sep { margin: 0 1px; }
.pct { margin-left: 3px; }
.sel { border: 1px solid #616161; border-radius: 4px; background: #ebebeb; width: 24px; margin: 0 1px; }
.tallsep { width: 1px; height: 62px; margin: 2px 0 0 5px; background: #d1d1d1; }
.g-align .rows:first-child { width: 132px; }
.wrapcol { padding-left: 9px; }
.r24 { height: 24px; }
.r32 { height: 32px; margin-top: 4px; }
.dec { display: flex; flex-direction: column; align-items: flex-end; font-size: 8px; line-height: 9px; }
.dec span { display: flex; }
.gallery { display: flex; height: 62px; margin: 3px 0 0 1px; border: 1px solid #d1d1d1; border-radius: 5px; width: 239px; font-size: 12px; color: #111; }
.styles { display: grid; grid-template-columns: 106px 106px; grid-template-rows: 28px 22px; row-gap: 3px; padding: 2px 0 0 1px; flex: 1; }
.st { justify-content: flex-start; padding-left: 4px; margin: 0 3px; }
.current { margin: 0; padding-left: 6px; border: 1px solid #555; box-shadow: inset 0 0 0 2px #e8e8e8; }
.good { background: #c6efce; color: #1d6b2d; }
.bad { background: #ffc7ce; color: #9c0006; }
.gmore { width: 24px; border: 1px solid #555; border-radius: 0 5px 5px 0; margin: -1px; }
.collapse { margin: 0 2px 9px auto; align-self: flex-end; }

/* security message */
.risk { display: flex; align-items: center; height: 31px; background: #fde7e9; border-bottom: 1px solid #c8c8c8; padding-left: 12px; }
.risk-h { margin: 0 8px; font-weight: 500; }
.risk a { font-size: 11px; text-decoration: underline; text-underline-offset: 2px; }
.readmore { margin-left: 16px; width: 61px; height: 26px; background: #fff; border: 1px solid #8a8a8a; border-radius: 4px; font-size: 11px; }
.risk-x { margin: 0 5px 0 auto; }

/* formula bar */
.fbar { display: flex; align-items: center; height: 26px; margin: 7px 0 8px 5px; flex: none; }
.namebox, .fbtns, .finput { display: flex; align-items: center; height: 26px; background: #fff; border: 1px solid #d4d4d4; border-radius: 4px; }
.namebox { width: 102px; padding: 0 4px 0 6px; font-size: 11px; }
.namebox input { width: 100%; }
.dots { margin: 0 9px; }
.fbtns { width: 74px; color: #b5b5b5; justify-content: space-between; padding: 0 5px; }
.fx { font: italic 17px/20px "Liberation Serif", serif; color: #333; }
.finput { flex: 1; margin-left: 4px; border-right: 0; border-radius: 4px 0 0 4px; }
.finput input { flex: 1; }
.finput svg { margin-right: -3px; }

/* sheet */
.sheet { display: flex; flex: 1; min-height: 0; }
.grid { flex: 1; overflow: hidden; margin-right: 1px; background: linear-gradient(#efefef 19px, #fff 19px); border-right: 1px solid #e0e0e0; }
table { table-layout: fixed; width: 1900px; border-collapse: separate; border-spacing: 0; color: #000; }
th, td { padding: 1px 2px 0; border-right: 1px solid #e1e1e1; border-bottom: 1px solid #e1e1e1; height: 20px; line-height: 18px; white-space: nowrap; overflow: hidden; text-align: right; font-weight: 400; }
th { background: #efefef; color: #555; text-align: center; padding: 1px 4px 0 0; }
thead th { height: 19px; line-height: 16px; padding: 0 0 3px; border-right: 1px solid; border-image: linear-gradient(#efefef, #c8c8c8) 1; border-bottom: 0; box-shadow: inset 0 -1px #9f9f9f; }
thead th:first-child { background: linear-gradient(135deg, #efefef 60%, #dcdcdc 60%); box-shadow: none; }
tbody th { border-right-color: #9f9f9f; }
tbody tr:first-child > * { border-bottom-color: #999; }
tbody tr:first-child td { font-weight: 700; text-align: left; }
.c0 { width: 23px; } .cA { width: 85px; } .cN { width: 64px; }
.vscroll { width: 6px; background: #f6f6f6; border-radius: 4px 0 0 0; display: flex; justify-content: flex-end; padding: 19px 0 141px; }
.vscroll span { width: 1px; background: #666; }

/* sheet tabs */
.sheetbar { display: flex; align-items: center; height: 32px; border-top: 1px solid #dadada; border-bottom: 1px solid #fbfbfb; font-size: 13px; padding-left: 25px; flex: none; }
.nav { color: #999; margin-right: 27px; }
.sheets { display: flex; align-items: center; align-self: stretch; margin-left: 20px; }
.sheets button { height: 18px; padding: 0 14px; border-right: 1px solid #c8c8c8; }
.sheets .active { align-self: flex-start; height: 29px; margin: -1px 4px 0 3px; padding: 0 8px; border: 0; background: #fff; border-radius: 0 0 5px 5px; font-size: 12px; font-weight: 700; box-shadow: 0 1px 1px #0002; }
.sheets::after { content: ""; width: 1px; height: 18px; background: #c8c8c8; }
.active span { border-bottom: 2px solid #107c41; line-height: 18px; }
.plus { margin-left: 40px; }
.grip { margin: 0 15px 0 auto; }
.hscroll { display: flex; align-items: center; width: 727px; height: 18px; padding: 0 5px; border-radius: 9px; background: #f6f6f6; margin-right: 8px; }
.hscroll span { width: 669px; height: 9px; border-radius: 4px; background: #6e706f; margin: 0 auto 0 5px; }

/* status bar */
.status { display: flex; align-items: center; height: 23px; background: #f4f4f4; border-bottom: 1px solid #b5b0ae; padding-left: 8px; font-size: 11px; flex: none; overflow: hidden; }
.mac { margin: 0 17px 0 19px; }
.acc { gap: 3px; font-size: 11px; }
.disp { margin-left: auto; gap: 3px; margin-right: 19px; }
.view { width: 40px; height: 22px; }
.view.on { background: #dedede; }
.zm { margin: 0 6px; }
.zoom { appearance: none; width: 100px; height: 12px; background: linear-gradient(#666, #666) center / 100% 1px no-repeat; margin: 0 0 0 -2px; }
.zoom::-webkit-slider-thumb { appearance: none; width: 5px; height: 11px; background: #5c5c5c; }
.pc { margin: 0 -10px 0 8px; white-space: nowrap; }
```
FILE: grid.js
```js
const header = ["Månad", "EUR", "USD", "AUD", "CHF", "DKK", "PLN", "GBP", "CAD", "NOK", "BRL"];
// one line per month, "-" marks a month without a rate
const rows = `202105 10,1426 8,3508 6,4811 9,25085 1,363956 2,2407 11,7571 6,8838 1,005759
202106 10,1153 8,3903 6,4182 9,248563 1,360238 2,2492 11,7751 6,871 0,997042
202107 10,1991 8,6278 6,4031 9,394571 1,3713 2,2357 11,9074 6,8869 0,982109
202108 10,2144 8,6777 6,336 9,493027 1,373479 2,2362 11,9774 6,8896 0,979874
202109 10,1718 8,6388 6,3261 9,365915 1,367896 2,2277 11,8703 6,8236 0,997709
202110 10,0622 8,6727 6,4144 9,390225 1,352477 2,1914 11,8688 6,9667 1,023545
202111 10,0455 8,8012 6,4321 9,546853 1,350687 2,1637 11,8473 7,0073 1,008435
202112 10,272 9,0914 6,5017 9,866666 1,381364 2,2267 12,0872 7,1035 1,011867
202201 10,3493 9,1383
202202 10,5422 9,291
202203 10,5514 9,5715
202204 10,3257 9,5405
202205 10,4909 9,9297
202206 10,5967 10,025
202207 10,5804 10,3835
202208 10,5053 10,3768
202209 10,7811 10,8808
202210 10,9472 11,129
202211 10,8772 10,6711
202212 10,9811 10,3759
202301 11,1921 10,3738
202302 11,1807 10,4316
202303 11,2153 10,4742
202304 11,3353 10,3357
202305 11,3722 10,4447
202306 11,6671 10,7631
202307 11,6347 10,5242
202308 11,8068 10,8189
202309 11,8457 11,0855
202310 11,642 11,0237
202311 11,554 10,6988
202312 11,2028 10,2768
202401 11,2834 10,3472
202402 11,25 10,4221
202403 11,525 10,66044
202404 11,525 10,66044
202405 11,61375 10,73795
202406 11,28694 10,49285 6,96472 - - - - - - 1,95009
202407 11,5324 10,63475 7,09383 - - - - - - 1,92054
202408 11,45566 10,40418
202409 11,35773 10,22799`.split("\n").map(line => line.split(" ").map(v => v === "-" ? "" : v));

const COLS = 29;
const name = i => i < 26 ? String.fromCharCode(65 + i) : "A" + String.fromCharCode(39 + i);
const cell = (tag, text, cls) => {
  const el = document.createElement(tag);
  el.textContent = text;
  if (cls) el.className = cls;
  return el;
};

const head = document.createElement("tr");
head.append(cell("th", "", "c0"));
for (let c = 0; c < COLS; c++) head.append(cell("th", name(c), c ? "cN" : "cA"));
document.querySelector("#grid thead").append(head);

const body = document.querySelector("#grid tbody");
[header, ...rows].forEach((values, r) => {
  const tr = document.createElement("tr");
  tr.append(cell("th", r + 1));
  for (let c = 0; c < COLS; c++) tr.append(cell("td", values[c] || ""));
  body.append(tr);
});
```
